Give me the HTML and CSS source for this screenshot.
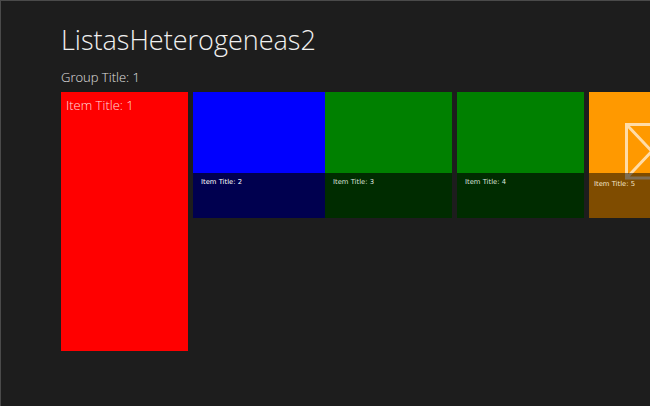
FILE: index.html
```html
<!DOCTYPE html>
<html lang="en">
<head>
<meta charset="utf-8">
<title>ListasHeterogeneas2</title>
<link rel="stylesheet" href="styles.css">
</head>
<body>
<main class="page">
  <h1 class="app-title">ListasHeterogeneas2</h1>
  <h2 class="group-title">Group Title: 1</h2>
  <div class="items">
    <article class="tile tile-large"><span class="large-label">Item Title: 1</span></article>
    <div class="tile-pair">
      <article class="tile tile-blue"><div class="caption caption-blue">Item Title: 2</div></article>
      <article class="tile tile-green tile-narrow"><div class="caption caption-dim">Item Title: 3</div></article>
    </div>
    <article class="tile tile-green tile-std"><div class="caption caption-dim">Item Title: 4</div></article>
    <article class="tile tile-orange tile-std">
      <svg class="placeholder" width="127" height="126" viewBox="0 0 127 126" aria-hidden="true">
        <path d="M37.5 32.5H200V86H37.5ZM37.5 32.5L88 86M37.5 86L88 32.5" fill="none" stroke="#ffdca8" stroke-width="3"/>
      </svg>
      <div class="caption caption-orange">Item Title: 5</div>
    </article>
  </div>
</main>
</body>
</html>
```

FILE: styles.css
```css
html, body {
  margin: 0;
  height: 100%;
  overflow: hidden;
  background: #1d1d1d;
}

.page {
  box-sizing: border-box;
  width: 650px;
  height: 406px;
  padding: 21px 0 0 60px;
  border-top: 1px solid #4a4a4a;
  border-left: 1px solid #4a4a4a;
  font-family: "Open Sans", "Liberation Sans", sans-serif;
  color: #f0f0f0;
  overflow: hidden;
}

.app-title {
  margin: 0;
  font-size: 27px;
  line-height: 36px;
  font-weight: 300;
}

.group-title {
  margin: 10px 0 0;
  font-size: 13px;
  line-height: 18px;
  font-weight: 300;
  color: #e0e0e0;
}

.items {
  display: flex;
  align-items: flex-start;
  gap: 5px;
  margin-top: 6px;
  width: 700px;
}

.tile {
  position: relative;
  flex: none;
  height: 126px;
  overflow: hidden;
}

.tile-large {
  width: 127px;
  height: 258.5px;
  background: #ff0000;
}

.large-label {
  display: block;
  padding: 5px 0 0 5px;
  font-size: 13px;
  line-height: 17px;
  font-weight: 300;
  color: #ffdcdc;
}

.tile-pair {
  display: flex;
  flex: none;
}

.tile-blue {
  width: 132px;
  background: #0000ff;
}

.tile-green {
  background: #008000;
}

.tile-narrow,
.tile-std {
  width: 127px;
}

.tile-orange {
  background: #ff9900;
}

.caption {
  position: absolute;
  left: 0;
  right: 0;
  bottom: 0;
  height: 45px;
  box-sizing: border-box;
  padding: 4px 0 0 8px;
  font-family: "DejaVu Sans", sans-serif;
  font-size: 6.8px;
  line-height: 10px;
}

.caption-blue {
  background: #00004f;
  color: #ffffff;
}

.caption-dim {
  background: #002c00;
  color: #d8e0d8;
}

.caption-orange {
  background: rgba(0, 0, 0, 0.5);
  padding: 6px 0 0 5px;
  color: #f4e4c8;
}

.placeholder {
  display: block;
}
```
